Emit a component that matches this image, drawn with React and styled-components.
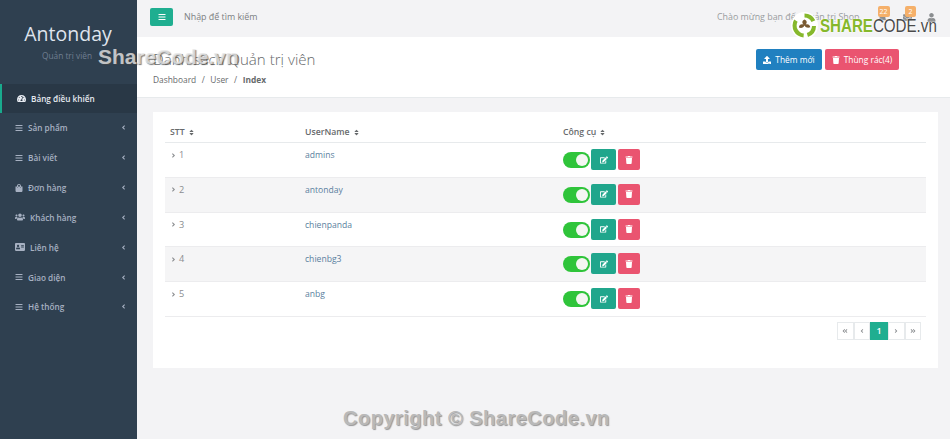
import React from "react";
import styled, { createGlobalStyle } from "styled-components";
import {
  FaBars, FaTachometerAlt, FaShoppingBag, FaUsers, FaAddressCard, FaAngleLeft, FaAngleRight,
  FaAngleDoubleLeft, FaAngleDoubleRight, FaEdit, FaTrash, FaUpload, FaSort, FaEnvelope, FaUser, FaBell,
} from "react-icons/fa";

const Global = createGlobalStyle`
  html, body { margin: 0; padding: 0; height: 100%; }
  body { font-family: "Open Sans", "Liberation Sans", sans-serif; background: #f3f3f5; color: #676a6c; overflow: hidden; }
  * { box-sizing: border-box; }
`;

const Layout = styled.div`
  position: relative;
  display: flex;
  width: 950px;
  height: 439px;
  overflow: hidden;
`;

const Sidebar = styled.aside`
  width: 137px;
  flex-shrink: 0;
  background: #2f4050;
  color: #a7b1c2;
`;

const Brand = styled.div`
  height: 84px;
  padding-top: 21px;
  text-align: center;
`;

const BrandName = styled.div`
  font-size: 19.5px;
  line-height: 26px;
  color: #dfe4ed;
  padding-right: 1px;
`;

const BrandSub = styled.div`
  font-size: 8.3px;
  line-height: 12px;
  margin-top: 3px;
  color: #6f7f91;
  padding-right: 45px;
  text-align: right;
`;

const MenuItem = styled.div`
  display: flex;
  align-items: center;
  height: ${(p) => (p.$active ? "29px" : "29.85px")};
  padding-left: 15px;
  padding-right: 10px;
  font-size: 8.2px;
  font-weight: 600;
  color: ${(p) => (p.$active ? "#e6eaf0" : "#a7b1c2")};
  background: ${(p) => (p.$active ? "#293846" : "transparent")};
  border-left: ${(p) => (p.$active ? "2px solid #19aa8d" : "none")};
  svg.lead { width: 8px; height: 8px; margin-right: 5px; flex-shrink: 0; }
  svg.wide { width: 10px; height: 10px; margin-right: 5px; flex-shrink: 0; }
  svg.gauge { width: 9px; height: 9px; margin-right: 5px; flex-shrink: 0; }
  span { flex: 1; white-space: nowrap; }
  svg.caret { width: 7px; height: 7px; flex-shrink: 0; }
`;

const Main = styled.main`
  flex: 1;
  min-width: 0;
`;

const TopBar = styled.header`
  display: flex;
  align-items: center;
  height: 37px;
  padding-left: 13px;
  padding-right: 6px;
  font-size: 8.9px;
  color: #8d9093;
`;

const Toggle = styled.button`
  width: 23px;
  height: 18px;
  display: flex;
  align-items: center;
  justify-content: center;
  border: none;
  border-radius: 2px;
  padding: 0;
  margin-bottom: 4px;
  background: #1fae90;
  color: #fff;
  svg { width: 8px; height: 8px; }
`;

const Search = styled.div`
  margin-left: 11px;
  flex: 1;
  color: #7c7f82;
  margin-bottom: 4px;
`;

const Welcome = styled.div`
  color: #9a9da0;
  font-size: 8.9px;
  margin-right: 11px;
  margin-bottom: 4px;
`;

const TopIcon = styled.div`
  position: relative;
  width: 24.5px;
  height: 30px;
  display: flex;
  justify-content: center;
  padding-top: 9px;
  color: #8a8d90;
  svg { width: 9px; height: 9px; }
`;

const Badge = styled.span`
  position: absolute;
  top: 2.5px;
  left: ${(p) => p.$left}px;
  min-width: 11px;
  height: 11px;
  padding: 0 2px;
  border-radius: 2px;
  background: #f5b06a;
  color: #fff;
  font-size: 7px;
  line-height: 11px;
  text-align: center;
`;

const Heading = styled.section`
  display: flex;
  justify-content: space-between;
  height: 61px;
  background: #fff;
  padding: 12px 51px 0 16px;
  border-bottom: 1px solid #e7eaec;
`;

const Title = styled.h2`
  margin: 0;
  font-size: 15.1px;
  line-height: 20px;
  font-weight: 300;
  color: #676a6c;
`;

const Crumbs = styled.div`
  display: flex;
  gap: 5.5px;
  margin-top: 5px;
  font-size: 8.4px;
  line-height: 12px;
  color: #676a6c;
  b { font-weight: 700; }
`;

const Actions = styled.div`
  display: flex;
  gap: 3px;
`;

const ActionButton = styled.button`
  display: flex;
  align-items: center;
  justify-content: center;
  gap: 4px;
  width: ${(p) => p.$w}px;
  height: 21px;
  border: none;
  padding: 0;
  border-radius: 2px;
  background: ${(p) => p.$bg};
  color: #fff;
  font-family: inherit;
  font-size: 8.4px;
  svg { width: 8px; height: 8px; }
`;

const Content = styled.div`
  padding: 14px 12px 0 16px;
`;

const Card = styled.div`
  height: 256px;
  background: #fff;
  padding: 10px 12px 0 12px;
`;

const Grid = styled.div`
  display: grid;
  grid-template-columns: 140px 258px 1fr;
`;

const HeadCell = styled.div`
  display: flex;
  align-items: center;
  gap: 3px;
  height: 21px;
  padding-left: ${(p) => p.$pad || 0}px;
  font-size: 8.7px;
  font-weight: 600;
  color: #676a6c;
  border-bottom: 1px solid #e7eaec;
  svg { width: 7px; height: 7px; }
`;

const Cell = styled.div`
  height: 34.8px;
  background: ${(p) => (p.$odd ? "#f5f5f6" : "#fff")};
  border-bottom: 1px solid #ececee;
  padding-left: ${(p) => p.$pad || 0}px;
  font-size: 8.6px;
`;

const Num = styled.div`
  display: flex;
  align-items: center;
  gap: 2px;
  padding-top: 6px;
  color: #8a8d90;
  font-size: 9.2px;
  line-height: 12px;
  svg { width: 7px; height: 7px; }
`;

const UserLink = styled.a`
  display: block;
  padding-top: 6px;
  line-height: 12px;
  color: #5a7f9e;
`;

const Tools = styled.div`
  display: flex;
  align-items: flex-start;
  padding-top: 6px;
`;

const Switch = styled.div`
  position: relative;
  width: 27px;
  height: 16px;
  margin-top: 3px;
  margin-right: 1px;
  border-radius: 8px;
  background: #2fc43a;
  &::after {
    content: "";
    position: absolute;
    top: 2px;
    right: 2px;
    width: 12px;
    height: 12px;
    border-radius: 50%;
    background: #f4f6f2;
  }
`;

const ToolButton = styled.button`
  display: flex;
  align-items: center;
  justify-content: center;
  width: ${(p) => p.$w}px;
  height: 21px;
  margin-right: 2px;
  padding: 0;
  border: none;
  border-radius: 2px;
  background: ${(p) => p.$bg};
  color: #fff;
  svg { width: 8px; height: 8px; }
`;

const Pager = styled.div`
  display: flex;
  justify-content: flex-end;
  padding: 5px 5px 0 0;
`;

const PageItem = styled.div`
  display: flex;
  align-items: center;
  justify-content: center;
  width: ${(p) => (p.$active ? "18px" : "16.5px")};
  height: 18px;
  border: 1px solid ${(p) => (p.$active ? "#1fae90" : "#e7eaec")};
  background: ${(p) => (p.$active ? "#1fae90" : "#fff")};
  color: ${(p) => (p.$active ? "#fff" : "#8a8d90")};
  font-size: 9px;
  font-weight: 600;
  svg { width: 6px; height: 6px; }
`;

const ShareMark = styled.div`
  position: absolute;
  left: 98px;
  top: 45px;
  font-family: "Liberation Sans", sans-serif;
  font-size: 20.9px;
  line-height: 24px;
  font-weight: 700;
  color: rgba(232, 232, 232, 0.8);
  text-shadow: 1px 1px 1px rgba(70, 70, 70, 0.7);
  white-space: nowrap;
`;

const CopyMark = styled.div`
  position: absolute;
  left: 343px;
  top: 406px;
  font-family: "Liberation Sans", sans-serif;
  font-size: 20px;
  line-height: 24px;
  font-weight: 700;
  letter-spacing: 0.5px;
  color: #b9b9b9;
  text-shadow: 1px 1px 1px rgba(90, 90, 90, 0.6);
  white-space: nowrap;
`;

const LogoMark = styled.div`
  position: absolute;
  left: 791px;
  top: 12px;
  display: flex;
  align-items: center;
  gap: 2px;
  height: 27px;
  font-family: "Liberation Sans", sans-serif;
  font-size: 18px;
  line-height: 18px;
  white-space: nowrap;
  color: #4a4a4a;
  text-shadow: 0 0 2px #fff, 0 0 2px #fff;
`;

const LogoText = styled.span`
  display: inline-block;
  transform: scaleX(0.84);
  transform-origin: left center;
  b { color: #86b82c; font-weight: 700; }
  em { font-style: normal; font-weight: 400; }
`;

const menu = [
  { label: "Sản phẩm", Icon: FaBars },
  { label: "Bài viết", Icon: FaBars },
  { label: "Đơn hàng", Icon: FaShoppingBag },
  { label: "Khách hàng", Icon: FaUsers, wide: true },
  { label: "Liên hệ", Icon: FaAddressCard, wide: true },
  { label: "Giao diện", Icon: FaBars },
  { label: "Hệ thống", Icon: FaBars },
];

const users = ["admins", "antonday", "chienpanda", "chienbg3", "anbg"];

export default function App() {
  return (
    <Layout>
      <Global />
      <Sidebar>
        <Brand>
          <BrandName>Antonday</BrandName>
          <BrandSub>Quản trị viên</BrandSub>
        </Brand>
        <MenuItem $active>
          <FaTachometerAlt className="gauge" />
          <span>Bảng điều khiển</span>
        </MenuItem>
        {menu.map(({ label, Icon, wide }) => (
          <MenuItem key={label}>
            <Icon className={wide ? "wide" : "lead"} />
            <span>{label}</span>
            <FaAngleLeft className="caret" />
          </MenuItem>
        ))}
      </Sidebar>
      <Main>
        <TopBar>
          <Toggle><FaBars /></Toggle>
          <Search>Nhập để tìm kiếm</Search>
          <Welcome>Chào mừng bạn đến quản trị Shop</Welcome>
          <TopIcon><FaBell /><Badge $left={7}>22</Badge></TopIcon>
          <TopIcon><FaEnvelope /><Badge $left={10}>2</Badge></TopIcon>
          <TopIcon><FaUser /></TopIcon>
        </TopBar>
        <Heading>
          <div>
            <Title>Danh sách Quản trị viên</Title>
            <Crumbs>
              <span>Dashboard</span><span>/</span>
              <span>User</span><span>/</span>
              <b>Index</b>
            </Crumbs>
          </div>
          <Actions>
            <ActionButton $w={66} $bg="#2080c0"><FaUpload />Thêm mới</ActionButton>
            <ActionButton $w={74} $bg="#ea5470"><FaTrash />Thùng rác(4)</ActionButton>
          </Actions>
        </Heading>
        <Content>
          <Card>
            <Grid>
              <HeadCell $pad={5}>STT <FaSort /></HeadCell>
              <HeadCell>UserName <FaSort /></HeadCell>
              <HeadCell>Công cụ <FaSort /></HeadCell>
              {users.map((name, i) => (
                <React.Fragment key={name}>
                  <Cell $odd={i % 2 === 1} $pad={5}><Num><FaAngleRight />{i + 1}</Num></Cell>
                  <Cell $odd={i % 2 === 1}><UserLink>{name}</UserLink></Cell>
                  <Cell $odd={i % 2 === 1}>
                    <Tools>
                      <Switch />
                      <ToolButton $w={25} $bg="#20a68c"><FaEdit /></ToolButton>
                      <ToolButton $w={22} $bg="#ea5470"><FaTrash /></ToolButton>
                    </Tools>
                  </Cell>
                </React.Fragment>
              ))}
            </Grid>
            <Pager>
              <PageItem><FaAngleDoubleLeft /></PageItem>
              <PageItem><FaAngleLeft /></PageItem>
              <PageItem $active>1</PageItem>
              <PageItem><FaAngleRight /></PageItem>
              <PageItem><FaAngleDoubleRight /></PageItem>
            </Pager>
          </Card>
        </Content>
      </Main>
      <ShareMark>ShareCode.vn</ShareMark>
      <LogoMark>
        <svg width="27" height="27" viewBox="0 0 27 27">
          <circle cx="13.5" cy="13.5" r="13.5" fill="#fff" />
          <path d="M13.5 1.5a12 12 0 0 1 10.8 6.8l-3.8 1.6a8 8 0 0 0-7-4.4z" fill="#86b82c" />
          <path d="M25 14a11.8 11.8 0 0 1-8 11l-1.2-3.9a8 8 0 0 0 5.2-7.1z" fill="#86b82c" />
          <path d="M12.5 25.6A12 12 0 0 1 3.2 7.6l3.4 2.2a8 8 0 0 0 6.2 11.8z" fill="#86b82c" />
          <path d="M13.5 7.5c2.6 1 2.8 3.4 1.2 5 2.3-.8 4.1.1 4.6 2.8-2.6 1-4.7.2-5.8-1.8-.9 2.1-3 3-5.6 2 .3-2.8 2.2-3.8 4.6-3-1.7-1.6-1.5-4 1-5z" fill="#7a5a32" />
        </svg>
        <LogoText><b>SHARE</b><em>CODE.vn</em></LogoText>
      </LogoMark>
      <CopyMark>Copyright © ShareCode.vn</CopyMark>
    </Layout>
  );
}
